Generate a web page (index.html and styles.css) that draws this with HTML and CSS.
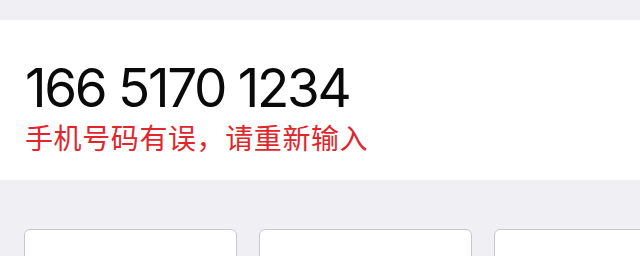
FILE: index.html
```html
<!DOCTYPE html>
<html lang="zh-CN">
<head>
<meta charset="utf-8">
<link rel="stylesheet" href="styles.css">
</head>
<body>
<div class="top-band"></div>
<section class="panel">
  <div class="phone">166 5170 1234</div>
  <div class="error">手机号码有误，请重新输入</div>
</section>
<section class="keypad">
  <div class="key"></div>
  <div class="key"></div>
  <div class="key"></div>
</section>
</body>
</html>
```
FILE: styles.css
```css
html, body {
  margin: 0;
  padding: 0;
  background: #efeff4;
  width: 640px;
  height: 256px;
  overflow: hidden;
}
.top-band {
  height: 20px;
}
.panel {
  height: 160px;
  box-sizing: border-box;
  background: #ffffff;
  padding: 38px 0 0 25px;
}
.phone {
  font-family: Inter, "Liberation Sans", sans-serif;
  font-size: 53px;
  font-weight: 400;
  line-height: 60px;
  letter-spacing: -2.3px;
  font-variant-numeric: proportional-nums;
  color: #0a0a0a;
  white-space: nowrap;
}
.error {
  margin-top: 5px;
  font-family: "Noto Sans CJK SC", sans-serif;
  font-size: 28px;
  line-height: 28px;
  letter-spacing: 0.6px;
  color: #e0262b;
  white-space: nowrap;
}
.keypad {
  display: flex;
  gap: 22px;
  padding: 49px 0 0 24px;
}
.key {
  flex: 0 0 213px;
  height: 40px;
  box-sizing: border-box;
  background: #ffffff;
  border: 1px solid #c9c9cd;
  border-radius: 6px;
}
```
